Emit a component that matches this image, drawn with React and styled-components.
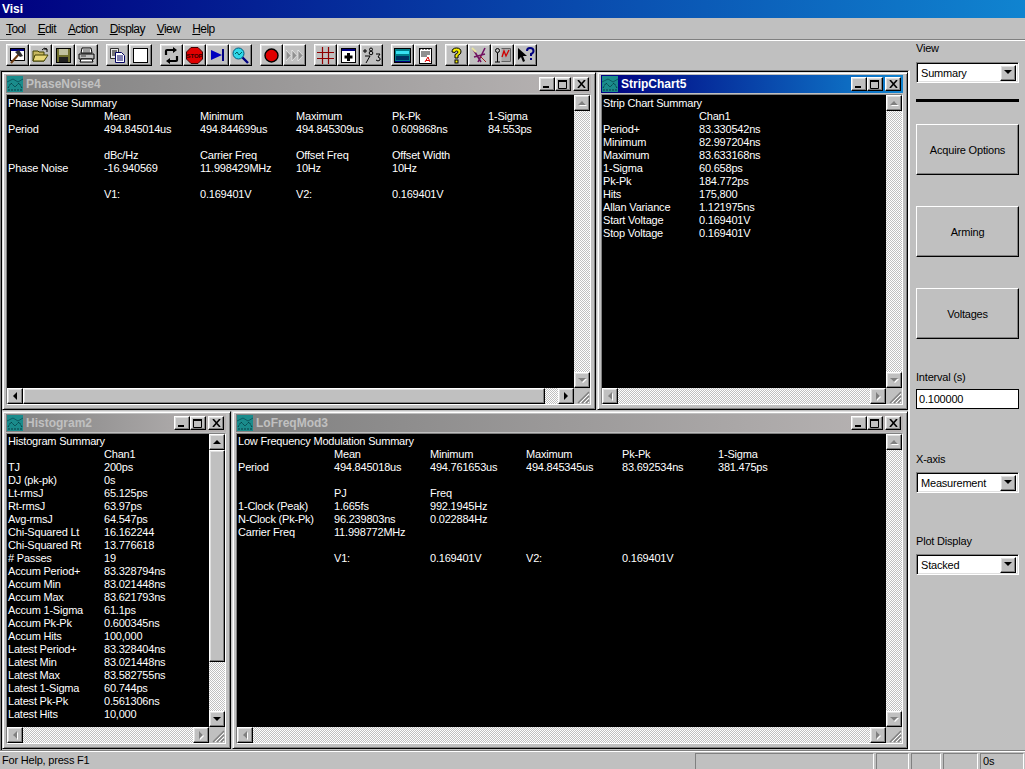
import React from 'react';
import styled, { createGlobalStyle, css } from 'styled-components';

const GlobalStyle = createGlobalStyle`
  html, body {
    margin: 0;
    padding: 0;
    background: #c0c0c0;
    overflow: hidden;
  }
  * {
    box-sizing: border-box;
  }
`;

const raised = css`
  border: 1px solid;
  border-color: #fff #000 #000 #fff;
  box-shadow: inset -1px -1px 0 #808080, inset 1px 1px 0 #dfdfdf;
`;

const sunken = css`
  border: 1px solid;
  border-color: #808080 #fff #fff #808080;
  box-shadow: inset 1px 1px 0 #000, inset -1px -1px 0 #dfdfdf;
`;

const Screen = styled.div`
  width: 1025px;
  height: 769px;
  display: flex;
  flex-direction: column;
  background: #c0c0c0;
  font-family: 'Liberation Sans', Arial, sans-serif;
  font-size: 11px;
  letter-spacing: -0.2px;
  color: #000;
`;

const TitleBar = styled.div`
  height: 18px;
  flex: none;
  padding: 1px 0 0 2px;
  background: linear-gradient(90deg, #000080, #1084d0);
  color: #fff;
  font-weight: bold;
  font-size: 12px;
  letter-spacing: 0;
  line-height: 17px;
`;

const MenuBar = styled.div`
  height: 22px;
  flex: none;
  display: flex;
  padding: 3px 0 0 6px;
  gap: 12px;
  line-height: 17px;
  font-size: 12px;
  letter-spacing: -0.6px;
  border-bottom: 1px solid #808080;
`;

const MenuItem = styled.span`
  u {
    text-decoration: underline;
  }
`;

const Body = styled.div`
  flex: 1;
  min-height: 0;
  display: flex;
  border-top: 1px solid #fff;
`;

const Work = styled.div`
  width: 910px;
  flex: none;
  display: flex;
  flex-direction: column;
`;

const Toolbar = styled.div`
  height: 29px;
  flex: none;
  display: flex;
  gap: 8px;
  padding: 3px 0 0 6px;
`;

const ToolGroup = styled.div`
  display: flex;
`;

const ToolButton = styled.div`
  width: 23px;
  height: 22px;
  display: flex;
  align-items: center;
  justify-content: center;
  ${raised}
`;

const Mdi = styled.div`
  flex: 1;
  min-height: 0;
  display: flex;
  flex-direction: column;
  gap: 1px;
  padding: 1px 1px 1px 1px;
  border-top: 1px solid #808080;
  border-left: 1px solid #808080;
  border-right: 2px solid #fff;
  box-shadow: inset 1px 1px 0 #000;
`;

const MdiRow = styled.div`
  min-height: 0;
  flex: ${p => (p.$height ? 'none' : 1)};
  height: ${p => (p.$height ? `${p.$height}px` : 'auto')};
  display: flex;
  gap: 1px;
`;

const WindowFrame = styled.div`
  width: ${p => p.$width}px;
  flex: none;
  display: flex;
  flex-direction: column;
  padding: 2px 4px 4px 3px;
  background: #c0c0c0;
  border: 1px solid;
  border-color: #dfdfdf #000 #000 #dfdfdf;
  box-shadow: inset 1px 1px 0 #fff, inset -1px -1px 0 #808080;
`;

const WinTitle = styled.div`
  height: 18px;
  flex: none;
  display: flex;
  align-items: center;
  padding: 0 2px 0 1px;
  gap: 3px;
  background: ${p =>
    p.$active
      ? 'linear-gradient(90deg, #000080, #1084d0)'
      : 'linear-gradient(90deg, #808080, #b8b4b4)'};
  color: ${p => (p.$active ? '#fff' : '#c0c0c0')};
  font-weight: bold;
  font-size: 12px;
  letter-spacing: 0;
`;

const WinName = styled.span`
  flex: 1;
  line-height: 17px;
`;

const WinButtons = styled.div`
  display: flex;
  align-items: center;
`;

const WinButton = styled.div`
  width: 16px;
  height: 14px;
  display: flex;
  align-items: center;
  justify-content: center;
  margin-left: ${p => (p.$gap ? 2 : 0)}px;
  background: #c0c0c0;
  ${raised}
`;

const WinClient = styled.div`
  flex: 1;
  min-height: 0;
  display: grid;
  grid-template-columns: minmax(0, 1fr) 16px;
  grid-template-rows: minmax(0, 1fr) 16px;
  margin-top: 1px;
  border: 1px solid;
  border-color: #808080 #fff #fff #808080;
`;

const Report = styled.div`
  background: #000;
  color: #fff;
  overflow: hidden;
  padding: ${p => p.$top}px 0 0 1px;
  line-height: 13px;
`;

const ReportRow = styled.div`
  height: 13px;
  display: grid;
  grid-template-columns: repeat(6, 96px);
  white-space: nowrap;
`;

const ScrollTrack = styled.div`
  display: flex;
  flex-direction: ${p => (p.$horizontal ? 'row' : 'column')};
  justify-content: space-between;
  background-color: #fff;
  background-image: conic-gradient(#c0c0c0 25%, #fff 0 50%, #c0c0c0 0 75%, #fff 0);
  background-size: 2px 2px;
`;

const ScrollButton = styled.div`
  width: 16px;
  height: 16px;
  flex: none;
  display: flex;
  align-items: center;
  justify-content: center;
  background: #c0c0c0;
  ${raised}
`;

const Thumb = styled.div`
  flex: none;
  width: ${p => (p.$horizontal ? `${p.$size}px` : '16px')};
  height: ${p => (p.$horizontal ? '16px' : `${p.$size}px`)};
  background: #c0c0c0;
  ${raised}
`;

const TrackFill = styled.div`
  flex: 1;
`;

const Grip = styled.div`
  background: #c0c0c0;
  display: flex;
  align-items: flex-end;
  justify-content: flex-end;
`;

const Side = styled.div`
  flex: 1;
  display: flex;
  flex-direction: column;
  padding: 0 0 0 6px;
`;

const SideLabel = styled.div`
  height: 14px;
  line-height: 14px;
  margin-top: ${p => p.$top}px;
  margin-bottom: ${p => p.$bottom}px;
`;

const Select = styled.div`
  width: 103px;
  height: 21px;
  flex: none;
  display: flex;
  align-items: center;
  justify-content: space-between;
  padding: 2px 2px 2px 4px;
  background: #fff;
  ${sunken}
`;

const DropArrow = styled.div`
  width: 16px;
  height: 16px;
  display: flex;
  align-items: center;
  justify-content: center;
  background: #c0c0c0;
  ${raised}
`;

const Rule = styled.div`
  width: 103px;
  height: 3px;
  flex: none;
  margin-top: 16px;
  background: #000;
`;

const SideButton = styled.div`
  width: 103px;
  height: 51px;
  flex: none;
  display: flex;
  align-items: center;
  justify-content: center;
  margin-top: ${p => p.$top}px;
  border: 1px solid;
  border-color: #fff #000 #000 #fff;
  box-shadow: inset -1px -1px 0 #808080;
`;

const TextInput = styled.div`
  width: 103px;
  height: 20px;
  flex: none;
  padding: 3px 0 0 2px;
  line-height: 13px;
  background: #fff;
  border: 1px solid #000;
`;

const StatusBar = styled.div`
  height: 19px;
  flex: none;
  display: flex;
  align-items: stretch;
  border-top: 1px solid #808080;
  box-shadow: inset 0 1px 0 #fff;
  padding-top: 2px;
`;

const StatusText = styled.div`
  width: 695px;
  flex: none;
  padding-left: 2px;
  line-height: 14px;
`;

const StatusCell = styled.div`
  width: ${p => p.$width}px;
  flex: none;
  margin-right: 2px;
  padding-left: 2px;
  line-height: 14px;
  border-top: 1px solid #808080;
  border-left: 1px solid #808080;
  border-right: 1px solid #fff;
`;

const Tri = ({ dir = 'up', on = false }) => {
  const points = {
    up: '4,1 0,5 8,5',
    down: '0,1 8,1 4,5',
    left: '5,0 5,8 1,4',
    right: '1,0 1,8 5,4',
  }[dir];
  const vertical = dir === 'up' || dir === 'down';
  return (
    <svg width={vertical ? 9 : 7} height={vertical ? 7 : 9} viewBox={vertical ? '0 0 9 7' : '0 0 7 9'}>
      {!on && <polygon points={points} fill="#fff" transform="translate(1 1)" />}
      <polygon points={points} fill={on ? '#000' : '#808080'} />
    </svg>
  );
};

const SizeGrip = () => (
  <svg width="14" height="14" viewBox="0 0 14 14">
    <path d="M13 2 L2 13 M13 6 L6 13 M13 10 L10 13" stroke="#808080" strokeWidth="1.4" />
    <path d="M13 4 L4 13 M13 8 L8 13 M13 12 L12 13" stroke="#fff" strokeWidth="1" />
  </svg>
);

const AppGlyph = () => (
  <svg width="16" height="16" viewBox="0 0 16 16" style={{ flex: 'none' }}>
    <rect width="16" height="16" fill="#1a8c8c" />
    <path d="M0 6 L6 3 L11 6 L16 3" stroke="#0b5a60" fill="none" />
    <path d="M1 12 L4 7 L8 11 L12 7 L15 12" stroke="#063c44" fill="none" strokeDasharray="2 1" />
    <path d="M1 14 H15" stroke="#063c44" strokeDasharray="2 1" />
  </svg>
);

const MinGlyph = () => (
  <svg width="8" height="8" viewBox="0 0 8 8"><rect x="0" y="6" width="6" height="2" /></svg>
);
const MaxGlyph = () => (
  <svg width="10" height="9" viewBox="0 0 10 9">
    <path d="M0.5 1.5 H8.5 V8.5 H0.5 Z" fill="none" stroke="#000" />
    <rect x="0" y="0" width="9" height="2" />
  </svg>
);
const CloseGlyph = () => (
  <svg width="9" height="8" viewBox="0 0 9 8">
    <path d="M1 0 L8 8 M8 0 L1 8" stroke="#000" strokeWidth="1.6" />
  </svg>
);

const icons = {
  hammer: (
    <svg width="17" height="17" viewBox="0 0 17 17">
      <rect x="1.5" y="1.5" width="14" height="12" fill="#fff" stroke="#000" />
      <rect x="2" y="2" width="13" height="2" fill="#000080" />
      <path d="M2 16 L10 7" stroke="#6b3a10" strokeWidth="2" />
      <path d="M6 5 L10 3 L14 9 L11 10 Z" fill="#303030" />
    </svg>
  ),
  open: (
    <svg width="17" height="16" viewBox="0 0 17 16">
      <path d="M1 4 H6 L7 5 H12 V14 H1 Z" fill="#c8b860" stroke="#404000" />
      <path d="M3 8 H16 L12 14 H1 Z" fill="#e8d878" stroke="#404000" />
      <path d="M10 3 Q12 0 15 2 M15 2 V5 M15 2 H12" stroke="#000" fill="none" />
    </svg>
  ),
  save: (
    <svg width="15" height="15" viewBox="0 0 15 15">
      <rect x="0.5" y="0.5" width="14" height="14" fill="#707030" stroke="#000" />
      <rect x="3" y="1" width="9" height="6" fill="#c0c0a0" />
      <rect x="3" y="9" width="9" height="5" fill="#202020" />
    </svg>
  ),
  print: (
    <svg width="17" height="16" viewBox="0 0 17 16">
      <path d="M4 1 H13 L14 6 H3 Z" fill="#fff" stroke="#000" />
      <path d="M1 7 H16 V12 H1 Z" fill="#c0c0c0" stroke="#000" />
      <path d="M3 12 H14 L15 15 H2 Z" fill="#fff" stroke="#000" />
      <path d="M5 3 H12 M5 5 H12 M3 9 H8" stroke="#404040" />
    </svg>
  ),
  copy: (
    <svg width="15" height="15" viewBox="0 0 15 15">
      <path d="M0.5 0.5 H8.5 V10.5 H0.5 Z" fill="#e8e8e8" stroke="#303030" />
      <path d="M2 3 H7 M2 5 H6 M2 7 H5" stroke="#000" />
      <path d="M5.5 4.5 H11.5 L14.5 7.5 V14.5 H5.5 Z" fill="#fff" stroke="#000060" />
      <path d="M7 8 H13 M7 10 H13 M7 12 H13" stroke="#000060" />
    </svg>
  ),
  blank: (
    <svg width="15" height="15" viewBox="0 0 15 15">
      <rect x="0.5" y="0.5" width="14" height="14" fill="#fff" stroke="#000" />
    </svg>
  ),
  loop: (
    <svg width="17" height="17" viewBox="0 0 17 17">
      <path d="M3 8 V4 Q3 3 4 3 H11 M14 9 V13 Q14 14 13 14 H6" stroke="#000" strokeWidth="2.2" fill="none" />
      <path d="M10 0 L14 3 L10 6 Z M7 11 L3 14 L7 17 Z" fill="#000" />
    </svg>
  ),
  stop: (
    <svg width="17" height="17" viewBox="0 0 17 17">
      <polygon points="5,0.5 12,0.5 16.5,5 16.5,12 12,16.5 5,16.5 0.5,12 0.5,5" fill="#e00000" stroke="#400000" />
      <text x="8.5" y="11" fontSize="6" fontWeight="bold" textAnchor="middle" fill="#300000" letterSpacing="0" fontFamily="Liberation Sans">STOP</text>
    </svg>
  ),
  step: (
    <svg width="14" height="14" viewBox="0 0 14 14">
      <polygon points="0,2 11,7 0,12" fill="#0000c0" />
      <rect x="11" y="1" width="2" height="12" fill="#000080" />
    </svg>
  ),
  zoom: (
    <svg width="17" height="17" viewBox="0 0 17 17">
      <circle cx="6.5" cy="6.5" r="5.5" fill="#30d8e8" stroke="#005a80" />
      <path d="M3 7 L5 5 L7 8 L10 5" stroke="#006060" fill="none" />
      <path d="M10.5 10.5 L16 16" stroke="#000080" strokeWidth="2.4" />
    </svg>
  ),
  record: (
    <svg width="15" height="15" viewBox="0 0 15 15">
      <circle cx="7.5" cy="7.5" r="6.5" fill="#e00000" stroke="#000" strokeWidth="1.4" />
    </svg>
  ),
  forward: (
    <svg width="17" height="13" viewBox="0 0 17 13">
      <path d="M0 1 L5 6.5 L0 12 Z M6 1 L11 6.5 L6 12 Z M12 1 L17 6.5 L12 12 Z" fill="#909090" stroke="#fff" strokeWidth="0.6" />
    </svg>
  ),
  grid: (
    <svg width="17" height="17" viewBox="0 0 17 17">
      <path d="M5.5 0 V17 M11.5 0 V17 M0 5.5 H17 M0 11.5 H17" stroke="#900000" strokeWidth="1.2" />
    </svg>
  ),
  cursor: (
    <svg width="15" height="15" viewBox="0 0 15 15">
      <rect x="0.5" y="0.5" width="14" height="14" fill="#fff" stroke="#000" />
      <rect x="1" y="1" width="13" height="2" fill="#000080" />
      <path d="M7.5 5 V13 M3.5 9 H11.5" stroke="#000" strokeWidth="3" />
    </svg>
  ),
  digits: (
    <svg width="19" height="17" viewBox="0 0 19 17">
      <path d="M1 4 H5 M3 2 V6" stroke="#000" />
      <path d="M3 9 H8 L4 16" stroke="#000" fill="none" />
      <circle cx="9" cy="2.5" r="1.5" fill="none" stroke="#000" />
      <circle cx="9" cy="6" r="1.8" fill="none" stroke="#000" />
      <path d="M14 7 H18 L16 10 Q19 11 18 13 Q16 15 14 13" stroke="#000" fill="none" />
    </svg>
  ),
  meter: (
    <svg width="17" height="15" viewBox="0 0 17 15">
      <rect x="0.5" y="0.5" width="16" height="14" fill="#007c88" stroke="#000" />
      <rect x="2" y="3" width="13" height="3" fill="#38e0f0" />
      <rect x="2" y="8" width="13" height="4" fill="#003060" />
      <path d="M1 13.5 H16" stroke="#000080" />
    </svg>
  ),
  note: (
    <svg width="15" height="17" viewBox="0 0 15 17">
      <rect x="1.5" y="1.5" width="12" height="15" fill="#fff" stroke="#000" />
      <path d="M2 1 V3 M5 1 V3 M8 1 V3 M11 1 V3" stroke="#000" />
      <path d="M3 5 H12 M3 7 H12 M3 9 H9" stroke="#202020" />
      <path d="M7 15 L10 10 L12 15 M8 13.5 H11" stroke="#e00000" fill="none" />
    </svg>
  ),
  help: (
    <svg width="15" height="17" viewBox="0 0 15 17">
      <path d="M3 5 Q3 1 7.5 1 Q12 1 12 5 Q12 7 9 8.5 V11 H6 V7.5 Q9 6.5 9 5 Q9 4 7.5 4 Q6 4 6 5.5 Z" fill="#f8f000" stroke="#000" />
      <rect x="6" y="13" width="3" height="3" fill="#f8f000" stroke="#000" />
    </svg>
  ),
  wand: (
    <svg width="17" height="17" viewBox="0 0 17 17">
      <path d="M2 2 L10 15 M14 1 L7 15 M3 10 L14 7" stroke="#701060" strokeWidth="1.6" />
      <path d="M1 1 L5 5" stroke="#e8e8a0" strokeWidth="2" />
      <path d="M9 9 L15 15" stroke="#a02020" />
    </svg>
  ),
  chart: (
    <svg width="18" height="17" viewBox="0 0 18 17">
      <circle cx="3.5" cy="3.5" r="2" fill="none" stroke="#000" />
      <path d="M3.5 6 V15 M1 15 H6" stroke="#000" />
      <path d="M7.5 1.5 H16.5 V14.5 H7.5" fill="#a8a8a8" stroke="#606060" />
      <path d="M8 10 L10 4 L12 9 L15 3" stroke="#d00000" fill="none" strokeWidth="1.3" />
    </svg>
  ),
  whatsthis: (
    <svg width="18" height="16" viewBox="0 0 18 16">
      <path d="M1 1 V13 L4 10 L6 15 L8 14 L6 9 H10 Z" fill="#000" />
      <path d="M10 4 Q10 1 13 1 Q16.5 1 16.5 4 Q16.5 6 14 7 V9 M14 11 V13" stroke="#000080" strokeWidth="2" fill="none" />
    </svg>
  ),
};

const toolGroups = [
  ['hammer', 'open', 'save', 'print'],
  ['copy', 'blank'],
  ['loop', 'stop', 'step', 'zoom'],
  ['record', 'forward'],
  ['grid', 'cursor', 'digits'],
  ['meter', 'note'],
  ['help', 'wand', 'chart', 'whatsthis'],
];

const phaseNoise = [
  ['Phase Noise Summary'],
  ['', 'Mean', 'Minimum', 'Maximum', 'Pk-Pk', '1-Sigma'],
  ['Period', '494.845014us', '494.844699us', '494.845309us', '0.609868ns', '84.553ps'],
  [],
  ['', 'dBc/Hz', 'Carrier Freq', 'Offset Freq', 'Offset Width'],
  ['Phase Noise', '-16.940569', '11.998429MHz', '10Hz', '10Hz'],
  [],
  ['', 'V1:', '0.169401V', 'V2:', '0.169401V'],
];

const stripChart = [
  ['Strip Chart Summary'],
  ['', 'Chan1'],
  ['Period+', '83.330542ns'],
  ['Minimum', '82.997204ns'],
  ['Maximum', '83.633168ns'],
  ['1-Sigma', '60.658ps'],
  ['Pk-Pk', '184.772ps'],
  ['Hits', '175,800'],
  ['Allan Variance', '1.121975ns'],
  ['Start Voltage', '0.169401V'],
  ['Stop Voltage', '0.169401V'],
];

const histogram = [
  ['Histogram Summary'],
  ['', 'Chan1'],
  ['TJ', '200ps'],
  ['DJ (pk-pk)', '0s'],
  ['Lt-rmsJ', '65.125ps'],
  ['Rt-rmsJ', '63.97ps'],
  ['Avg-rmsJ', '64.547ps'],
  ['Chi-Squared Lt', '16.162244'],
  ['Chi-Squared Rt', '13.776618'],
  ['# Passes', '19'],
  ['Accum Period+', '83.328794ns'],
  ['Accum Min', '83.021448ns'],
  ['Accum Max', '83.621793ns'],
  ['Accum 1-Sigma', '61.1ps'],
  ['Accum Pk-Pk', '0.600345ns'],
  ['Accum Hits', '100,000'],
  ['Latest Period+', '83.328404ns'],
  ['Latest Min', '83.021448ns'],
  ['Latest Max', '83.582755ns'],
  ['Latest 1-Sigma', '60.744ps'],
  ['Latest Pk-Pk', '0.561306ns'],
  ['Latest Hits', '10,000'],
];

const loFreq = [
  ['Low Frequency Modulation Summary'],
  ['', 'Mean', 'Minimum', 'Maximum', 'Pk-Pk', '1-Sigma'],
  ['Period', '494.845018us', '494.761653us', '494.845345us', '83.692534ns', '381.475ps'],
  [],
  ['', 'PJ', 'Freq'],
  ['1-Clock (Peak)', '1.665fs', '992.1945Hz'],
  ['N-Clock (Pk-Pk)', '96.239803ns', '0.022884Hz'],
  ['Carrier Freq', '11.998772MHz'],
  [],
  ['', 'V1:', '0.169401V', 'V2:', '0.169401V'],
];

function ChildWindow({ title, width, active, rows, vThumb, hThumb, textTop = 1 }) {
  return (
    <WindowFrame $width={width}>
      <WinTitle $active={active}>
        <AppGlyph />
        <WinName>{title}</WinName>
        <WinButtons>
          <WinButton><MinGlyph /></WinButton>
          <WinButton><MaxGlyph /></WinButton>
          <WinButton $gap><CloseGlyph /></WinButton>
        </WinButtons>
      </WinTitle>
      <WinClient>
        <Report $top={textTop}>
          {rows.map((row, idx) => (
            <ReportRow key={idx}>
              {row.map((cell, i) => <span key={i}>{cell}</span>)}
            </ReportRow>
          ))}
        </Report>
        <ScrollTrack>
          <ScrollButton><Tri dir="up" on={!!vThumb} /></ScrollButton>
          {vThumb && <Thumb $size={vThumb} />}
          <TrackFill />
          <ScrollButton><Tri dir="down" on={!!vThumb} /></ScrollButton>
        </ScrollTrack>
        <ScrollTrack $horizontal>
          <ScrollButton><Tri dir="left" on={!!hThumb} /></ScrollButton>
          {hThumb && <Thumb $horizontal $size={hThumb} />}
          <TrackFill />
          <ScrollButton><Tri dir="right" on={!!hThumb} /></ScrollButton>
        </ScrollTrack>
        <Grip><SizeGrip /></Grip>
      </WinClient>
    </WindowFrame>
  );
}

function Combo({ value }) {
  return (
    <Select>
      <span>{value}</span>
      <DropArrow><Tri dir="down" on /></DropArrow>
    </Select>
  );
}

export default function App() {
  return (
    <Screen>
      <GlobalStyle />
      <TitleBar>Visi</TitleBar>
      <MenuBar>
        <MenuItem><u>T</u>ool</MenuItem>
        <MenuItem><u>E</u>dit</MenuItem>
        <MenuItem><u>A</u>ction</MenuItem>
        <MenuItem><u>D</u>isplay</MenuItem>
        <MenuItem><u>V</u>iew</MenuItem>
        <MenuItem><u>H</u>elp</MenuItem>
      </MenuBar>
      <Body>
        <Work>
          <Toolbar>
            {toolGroups.map((group, idx) => (
              <ToolGroup key={idx}>
                {group.map(name => <ToolButton key={name}>{icons[name]}</ToolButton>)}
              </ToolGroup>
            ))}
          </Toolbar>
          <Mdi>
            <MdiRow $height={338}>
              <ChildWindow title="PhaseNoise4" width={594} rows={phaseNoise} hThumb={522} textTop={2} />
              <ChildWindow title="StripChart5" width={311} active rows={stripChart} textTop={2} />
            </MdiRow>
            <MdiRow>
              <ChildWindow title="Histogram2" width={229} rows={histogram} vThumb={212} />
              <ChildWindow title="LoFreqMod3" width={676} rows={loFreq} />
            </MdiRow>
          </Mdi>
        </Work>
        <Side>
          <SideLabel $top={0} $bottom={7}>View</SideLabel>
          <Combo value="Summary" />
          <Rule />
          <SideButton $top={22}>Acquire Options</SideButton>
          <SideButton $top={31}>Arming</SideButton>
          <SideButton $top={31}>Voltages</SideButton>
          <SideLabel $top={31} $bottom={5}>Interval (s)</SideLabel>
          <TextInput>0.100000</TextInput>
          <SideLabel $top={43} $bottom={6}>X-axis</SideLabel>
          <Combo value="Measurement" />
          <SideLabel $top={41} $bottom={6}>Plot Display</SideLabel>
          <Combo value="Stacked" />
        </Side>
      </Body>
      <StatusBar>
        <StatusText>For Help, press F1</StatusText>
        <StatusCell $width={179} />
        <StatusCell $width={33} />
        <StatusCell $width={30} />
        <StatusCell $width={35} />
        <StatusCell $width={44}>0s</StatusCell>
      </StatusBar>
    </Screen>
  );
}
